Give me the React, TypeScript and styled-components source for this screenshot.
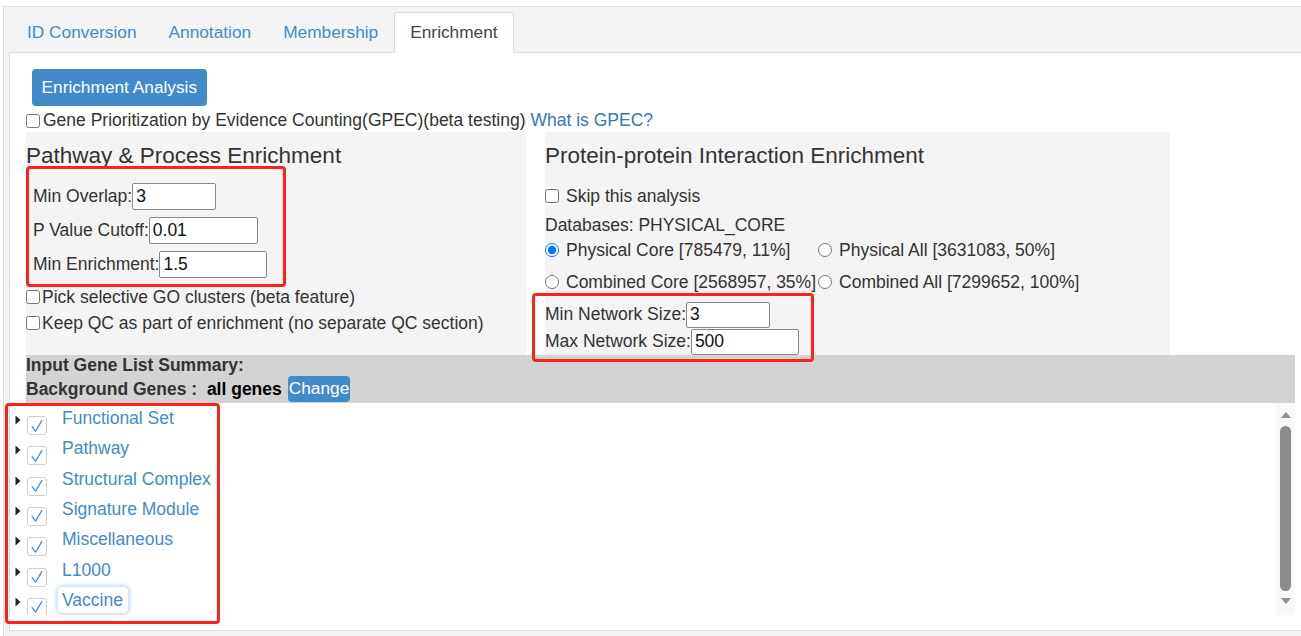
import React from "react";
import styled, { createGlobalStyle } from "styled-components";

const Global = createGlobalStyle`
  html, body { margin: 0; padding: 0; background: #fff; overflow: hidden; }
  body {
    font-family: "Liberation Sans", Arial, sans-serif;
    font-size: 17.5px;
    color: #333;
  }
  * { box-sizing: border-box; }
`;

const Page = styled.div`
  position: relative;
  width: 1301px;
  height: 636px;
  overflow: hidden;
  padding: 6px 0 0 3px;
`;

const Widget = styled.div`
  width: 1315px;
  border: 1px solid #ddd;
  background: #f4f4f4;
  padding: 5px 5px 6px 5px;
`;

const TabList = styled.div`
  display: flex;
  height: 41px;
  padding-left: 2px;
  border-bottom: 1px solid #ddd;
`;

const Tab = styled.div<{ $active?: boolean }>`
  height: 41px;
  margin-bottom: -1px;
  padding: 0 15px;
  line-height: 39px;
  font-size: 17.3px;
  border: 1px solid ${(p) => (p.$active ? "#ddd" : "transparent")};
  border-bottom-color: transparent;
  border-radius: 4px 4px 0 0;
  background: ${(p) => (p.$active ? "#fff" : "transparent")};
  color: ${(p) => (p.$active ? "#444" : "#428bca")};
  white-space: nowrap;
`;

const Panel = styled.div`
  background: #fff;
  border: 1px solid #ddd;
  border-top: none;
  padding: 16px 16px 15px 16px;
`;

const ButtonRow = styled.div`
  padding-left: 6px;
`;

const PrimaryButton = styled.button<{ $small?: boolean }>`
  height: ${(p) => (p.$small ? "26px" : "37px")};
  padding: ${(p) => (p.$small ? "0 1px" : "0 9.5px")};
  margin-left: ${(p) => (p.$small ? "6px" : "0")};
  background: #428bca;
  color: #fff;
  border: none;
  border-radius: 4px;
  font-family: inherit;
  font-size: 17.3px;
  line-height: 1;
  font-weight: normal;
`;

const Line = styled.div<{ $h?: number; $mt?: number; $pt?: number }>`
  display: flex;
  align-items: center;
  height: ${(p) => p.$h ?? 26}px;
  margin-top: ${(p) => p.$mt ?? 0}px;
  padding-top: ${(p) => p.$pt ?? 0}px;
  white-space: nowrap;
`;

const Check = styled.input.attrs({ type: "checkbox" })<{ $gap?: number }>`
  width: 14px;
  height: 14px;
  margin: 0 ${(p) => p.$gap ?? 2}px 0 0;
  flex: none;
`;

const Radio = styled.input.attrs({ type: "radio" })`
  width: 14px;
  height: 14px;
  margin: 0 7px 0 0;
  flex: none;
`;

const Link = styled.a`
  color: #337ab7;
  text-decoration: none;
  margin-left: 5px;
`;

const Options = styled.div`
  display: flex;
  gap: 19px;
`;

const Column = styled.div<{ $w: number }>`
  width: ${(p) => p.$w}px;
  background: #f4f4f4;
`;

const Heading = styled.h4`
  margin: 10px 0 0;
  font-size: 22.5px;
  line-height: 28px;
  font-weight: normal;
  color: #333;
  white-space: nowrap;
`;

const ParamGroup = styled.div`
  padding: 9px 0 0 7px;
`;

const ParamRow = styled.div<{ $h?: number }>`
  display: flex;
  align-items: center;
  height: ${(p) => p.$h ?? 34}px;
  white-space: nowrap;
`;

const NumInput = styled.input<{ $w: number; $h?: number }>`
  width: ${(p) => p.$w}px;
  height: ${(p) => p.$h ?? 27}px;
  border: 1px solid #8a8a8a;
  border-radius: 2px;
  padding: 0 3px;
  font-family: inherit;
  font-size: 17.5px;
  color: #111;
  background: #fff;
`;

const RadioGrid = styled.div`
  display: grid;
  grid-template-columns: auto auto;
  justify-content: start;
  grid-auto-rows: 24px;
  row-gap: 8px;
`;

const RadioItem = styled.label`
  display: flex;
  align-items: center;
  padding-right: 2px;
  white-space: nowrap;
`;

const NetGroup = styled.div`
  margin-top: 7px;
`;

const Summary = styled.div`
  background: #d3d3d3;
  height: 48px;
  font-weight: bold;
`;

const SummaryLine = styled.div<{ $h: number }>`
  display: flex;
  align-items: center;
  height: ${(p) => p.$h}px;
  white-space: pre;
`;

const Strong = styled.span`
  color: #000;
`;

const ListArea = styled.div`
  display: flex;
  margin-left: -16px;
  height: 212px;
`;

const ListItems = styled.div`
  flex: 1;
  overflow: hidden;
  padding-left: 5px;
`;

const ItemRow = styled.div`
  display: flex;
  align-items: flex-start;
  height: 30.33px;
`;

const Caret = styled.svg`
  flex: none;
  margin-top: 12px;
`;

const FancyCheck = styled.span`
  flex: none;
  display: flex;
  align-items: center;
  justify-content: center;
  width: 20px;
  height: 19px;
  margin: 13px 0 0 6px;
  border: 1px solid #cfcfcf;
  border-radius: 3px;
  background: #fff;
`;

const ItemLabel = styled.a<{ $focused?: boolean }>`
  margin: 1px 0 0 10px;
  padding: 0 5px 0 4px;
  height: 28px;
  line-height: 27px;
  color: #428bca;
  text-decoration: none;
  white-space: nowrap;
  border: 1px solid ${(p) => (p.$focused ? "#d6e6f5" : "transparent")};
  border-radius: 5px;
  background: #fff;
  box-shadow: ${(p) => (p.$focused ? "0 0 5px rgba(102, 160, 225, 0.55)" : "none")};
`;

const Scrollbar = styled.div`
  flex: none;
  width: 19px;
  height: 212px;
  background: #f9f9f9;
  display: flex;
  flex-direction: column;
  align-items: center;
  padding-top: 9px;
`;

const Thumb = styled.div`
  width: 11px;
  height: 165px;
  margin: 8px 0 7px;
  border-radius: 6px;
  background: #8c8c8c;
`;

const Annotation = styled.div<{ $x: number; $y: number; $w: number; $h: number }>`
  position: absolute;
  left: ${(p) => p.$x}px;
  top: ${(p) => p.$y}px;
  width: ${(p) => p.$w}px;
  height: ${(p) => p.$h}px;
  border: 3px solid #fb2319;
  border-radius: 4px;
  pointer-events: none;
`;

const items = [
  "Functional Set",
  "Pathway",
  "Structural Complex",
  "Signature Module",
  "Miscellaneous",
  "L1000",
  "Vaccine",
];

export default function App() {
  return (
    <>
      <Global />
      <Page>
        <Widget>
          <TabList>
            <Tab>ID Conversion</Tab>
            <Tab>Annotation</Tab>
            <Tab>Membership</Tab>
            <Tab $active>Enrichment</Tab>
          </TabList>
          <Panel>
            <ButtonRow>
              <PrimaryButton>Enrichment Analysis</PrimaryButton>
            </ButtonRow>
            <Line $pt={3}>
              <Check $gap={3} />
              Gene Prioritization by Evidence Counting(GPEC)(beta testing)
              <Link href="#">What is GPEC?</Link>
            </Line>
            <Options>
              <Column $w={500}>
                <Heading>Pathway &amp; Process Enrichment</Heading>
                <ParamGroup>
                  <ParamRow>
                    Min Overlap:
                    <NumInput $w={84} defaultValue="3" />
                  </ParamRow>
                  <ParamRow>
                    P Value Cutoff:
                    <NumInput $w={109} defaultValue="0.01" />
                  </ParamRow>
                  <ParamRow>
                    Min Enrichment:
                    <NumInput $w={108} defaultValue="1.5" />
                  </ParamRow>
                </ParamGroup>
                <Line $mt={3}>
                  <Check $gap={2} />
                  Pick selective GO clusters (beta feature)
                </Line>
                <Line>
                  <Check $gap={2} />
                  Keep QC as part of enrichment (no separate QC section)
                </Line>
              </Column>
              <Column $w={625}>
                <Heading>Protein-protein Interaction Enrichment</Heading>
                <Line $mt={13}>
                  <Check $gap={7} />
                  Skip this analysis
                </Line>
                <Line $mt={3}>Databases: PHYSICAL_CORE</Line>
                <RadioGrid>
                  <RadioItem>
                    <Radio name="ppi" defaultChecked />
                    Physical Core [785479, 11%]
                  </RadioItem>
                  <RadioItem>
                    <Radio name="ppi" />
                    Physical All [3631083, 50%]
                  </RadioItem>
                  <RadioItem>
                    <Radio name="ppi" />
                    Combined Core [2568957, 35%]
                  </RadioItem>
                  <RadioItem>
                    <Radio name="ppi" />
                    Combined All [7299652, 100%]
                  </RadioItem>
                </RadioGrid>
                <NetGroup>
                  <ParamRow $h={27}>
                    Min Network Size:
                    <NumInput $w={84} $h={26} defaultValue="3" />
                  </ParamRow>
                  <ParamRow $h={27}>
                    Max Network Size:
                    <NumInput $w={108} $h={26} defaultValue="500" />
                  </ParamRow>
                </NetGroup>
              </Column>
            </Options>
            <Summary>
              <SummaryLine $h={20}>Input Gene List Summary:</SummaryLine>
              <SummaryLine $h={28}>
                {"Background Genes :  "}
                <Strong>all genes</Strong>
                <PrimaryButton $small>Change</PrimaryButton>
              </SummaryLine>
            </Summary>
            <ListArea>
              <ListItems>
                {items.map((name, i) => (
                  <ItemRow key={name}>
                    <Caret width="6" height="10" viewBox="0 0 6 10">
                      <polygon points="0.5,0.5 5.5,5 0.5,9.5" fill="#222" />
                    </Caret>
                    <FancyCheck>
                      <svg width="16" height="16" viewBox="0 0 16 16">
                        <path
                          d="M3.2 8.6 L6.6 13.2 L12.8 2.6"
                          fill="none"
                          stroke="#4a8fd6"
                          strokeWidth="1.3"
                          strokeLinecap="round"
                          strokeLinejoin="round"
                        />
                      </svg>
                    </FancyCheck>
                    <ItemLabel href="#" $focused={i === items.length - 1}>
                      {name}
                    </ItemLabel>
                  </ItemRow>
                ))}
              </ListItems>
              <Scrollbar>
                <svg width="10" height="6" viewBox="0 0 10 6">
                  <polygon points="5,0 10,6 0,6" fill="#8c8c8c" />
                </svg>
                <Thumb />
                <svg width="10" height="6" viewBox="0 0 10 6">
                  <polygon points="0,0 10,0 5,6" fill="#8c8c8c" />
                </svg>
              </Scrollbar>
            </ListArea>
          </Panel>
        </Widget>
        <Annotation $x={26} $y={166} $w={260} $h={121} />
        <Annotation $x={532} $y={293} $w={282} $h={69} />
        <Annotation $x={5} $y={403} $w={215} $h={221} />
      </Page>
    </>
  );
}
